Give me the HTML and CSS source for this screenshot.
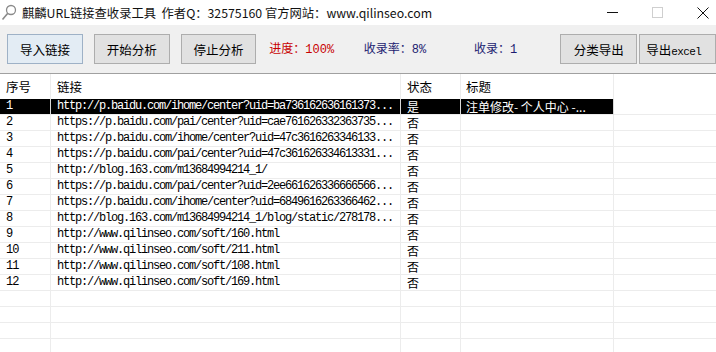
FILE: index.html
```html
<!DOCTYPE html>
<html lang="zh-CN">
<head>
  <meta charset="UTF-8" />
  <title>麒麟URL链接查收录工具</title>
  <link rel="stylesheet" href="styles.css">
</head>
<body>
  <div class="titlebar">
    <svg class="app-icon" width="16" height="18" viewBox="0 0 16 18">
      <circle cx="10" cy="6" r="4.5" fill="none" stroke="#8a8a8a" stroke-width="1.3"/>
      <line x1="6.8" y1="9.3" x2="1.5" y2="15.5" stroke="#8a8a8a" stroke-width="1.6"/>
    </svg>
    <span class="title">麒麟URL链接查收录工具&nbsp;&nbsp;作者Q：32575160 官方网站：www.qilinseo.com</span>
    <div class="win-controls">
      <div class="win-btn"><span class="min-line"></span></div>
      <div class="win-btn"><span class="max-box"></span></div>
      <div class="win-btn">
        <svg width="12" height="12" viewBox="0 0 12 12">
          <path d="M0.5 0.5 L11.5 11.5 M11.5 0.5 L0.5 11.5" stroke="#111" stroke-width="1"/>
        </svg>
      </div>
    </div>
  </div>

  <div class="toolbar">
    <button class="btn focused">导入链接</button>
    <button class="btn">开始分析</button>
    <button class="btn">停止分析</button>
    <span class="stat progress">进度：<span class="num">100%</span></span>
    <span class="stat rate">收录率：<span class="num">8%</span></span>
    <span class="stat count">收录：<span class="num">1</span></span>
    <button class="btn export">分类导出</button>
    <button class="btn export-excel">导出<span class="num">excel</span></button>
  </div>

  <div class="grid" id="grid">
    <div class="row head">
      <div class="cell">序号</div>
      <div class="cell">链接</div>
      <div class="cell">状态</div>
      <div class="cell">标题</div>
      <div class="cell"></div>
    </div>
  </div>

  <script>
    var rows = [
      ["1", "http://p.baidu.com/ihome/center?uid=ba736162636161373...", "是", "注单修改- 个人中心 -..."],
      ["2", "https://p.baidu.com/pai/center?uid=cae761626332363735...", "否", ""],
      ["3", "https://p.baidu.com/ihome/center?uid=47c3616263346133...", "否", ""],
      ["4", "https://p.baidu.com/pai/center?uid=47c361626334613331...", "否", ""],
      ["5", "http://blog.163.com/m13684994214_1/", "否", ""],
      ["6", "https://p.baidu.com/pai/center?uid=2ee661626336666566...", "否", ""],
      ["7", "https://p.baidu.com/ihome/center?uid=6849616263366462...", "否", ""],
      ["8", "http://blog.163.com/m13684994214_1/blog/static/278178...", "否", ""],
      ["9", "http://www.qilinseo.com/soft/160.html", "否", ""],
      ["10", "http://www.qilinseo.com/soft/211.html", "否", ""],
      ["11", "http://www.qilinseo.com/soft/108.html", "否", ""],
      ["12", "http://www.qilinseo.com/soft/169.html", "否", ""],
      ["", "", "", ""],
      ["", "", "", ""],
      ["", "", "", ""],
      ["", "", "", ""]
    ];

    var grid = document.getElementById("grid");
    rows.forEach(function (r, i) {
      var row = document.createElement("div");
      row.className = "row" + (i === 0 ? " selected" : "");
      row.innerHTML =
        '<div class="cell">' + r[0] + '</div>' +
        '<div class="cell url">' + r[1] + '</div>' +
        '<div class="cell">' + r[2] + '</div>' +
        '<div class="cell">' + r[3] + '</div>' +
        '<div class="cell blank"></div>';
      grid.appendChild(row);
    });
  </script>
</body>
</html>
```

FILE: styles.css
```css
body {
  margin: 0;
  width: 716px;
  height: 352px;
  overflow: hidden;
  background: #f0f0f0;
  font-family: "Noto Sans CJK SC", "Liberation Sans", sans-serif;
  font-size: 12px;
  color: #000;
}

.titlebar {
  height: 25px;
  background: #ffffff;
  display: flex;
  align-items: center;
}
.app-icon {
  margin-left: 1px;
  margin-right: 5px;
  margin-top: 1px;
}
.title {
  font-size: 12.3px;
  color: #111;
  white-space: nowrap;
}
.win-controls {
  margin-left: auto;
  margin-right: -9px;
  display: flex;
  height: 25px;
}
.win-btn {
  width: 45px;
  display: flex;
  align-items: center;
  justify-content: center;
}
.min-line {
  width: 11px;
  height: 1px;
  background: #111;
}
.max-box {
  width: 9px;
  height: 9px;
  border: 1px solid #cfcfcf;
}

.toolbar {
  height: 48px;
  display: flex;
  align-items: center;
  padding-left: 7px;
  border-bottom: 1px solid #a0a0a0;
}
.btn {
  width: 77px;
  height: 30px;
  margin: 0 11px 0 0;
  padding: 0;
  background: #e1e1e1;
  border: 1px solid #adadad;
  border-radius: 0;
  font-family: "Noto Sans CJK SC", sans-serif;
  font-size: 12.5px;
  color: #000;
}
.btn.focused {
  background: #e3ecf4;
  border-color: #9eb1c6;
}
.btn.export {
  width: 78px;
  margin-right: 2px;
}
.btn.export-excel {
  width: 78px;
  margin-right: 0;
  text-align: left;
  padding-left: 6px;
}
.btn .num {
  font-family: "Liberation Mono", monospace;
  font-size: 11px;
  letter-spacing: -0.6px;
}
.stat {
  white-space: nowrap;
  margin-top: -2px;
}
.stat .num {
  font-family: "Liberation Mono", monospace;
  font-size: 12px;
}
.progress {
  width: 96px;
  margin-left: 2px;
  color: #c80000;
}
.rate {
  width: 112px;
  color: #1c1c70;
}
.count {
  width: 88px;
  color: #1c1c70;
}

.grid {
  background: #ffffff;
  height: 278px;
}
.row {
  display: grid;
  grid-template-columns: 51px 350px 60px 153px 1fr;
  height: 16px;
}
.row .cell {
  border-right: 1px solid #ececec;
  border-bottom: 1px solid #ececec;
  padding-left: 6px;
  line-height: 15px;
  white-space: nowrap;
  overflow: hidden;
}
.row .cell:last-child {
  border-right: none;
}
.row.head {
  height: 25px;
}
.row.head .cell {
  line-height: 25px;
  border-bottom: none;
  font-size: 12.5px;
}
.row.head .cell:nth-child(4) {
  padding-left: 5px;
}
.row .cell:first-child {
  font-family: "Liberation Mono", monospace;
  font-size: 12px;
  letter-spacing: -1px;
}
.row.head .cell:first-child {
  font-family: "Noto Sans CJK SC", sans-serif;
  font-size: 12.5px;
  letter-spacing: 0;
}
.cell.url {
  font-family: "Liberation Mono", monospace;
  font-size: 12px;
  letter-spacing: -1.2px;
}
.row.selected .cell {
  background: #000000;
  color: #ffffff;
  border-right-color: #d8d8d8;
}
.row.selected .cell.blank {
  background: #ffffff;
}
.row .cell:nth-child(4) {
  padding-left: 5px;
}
```
